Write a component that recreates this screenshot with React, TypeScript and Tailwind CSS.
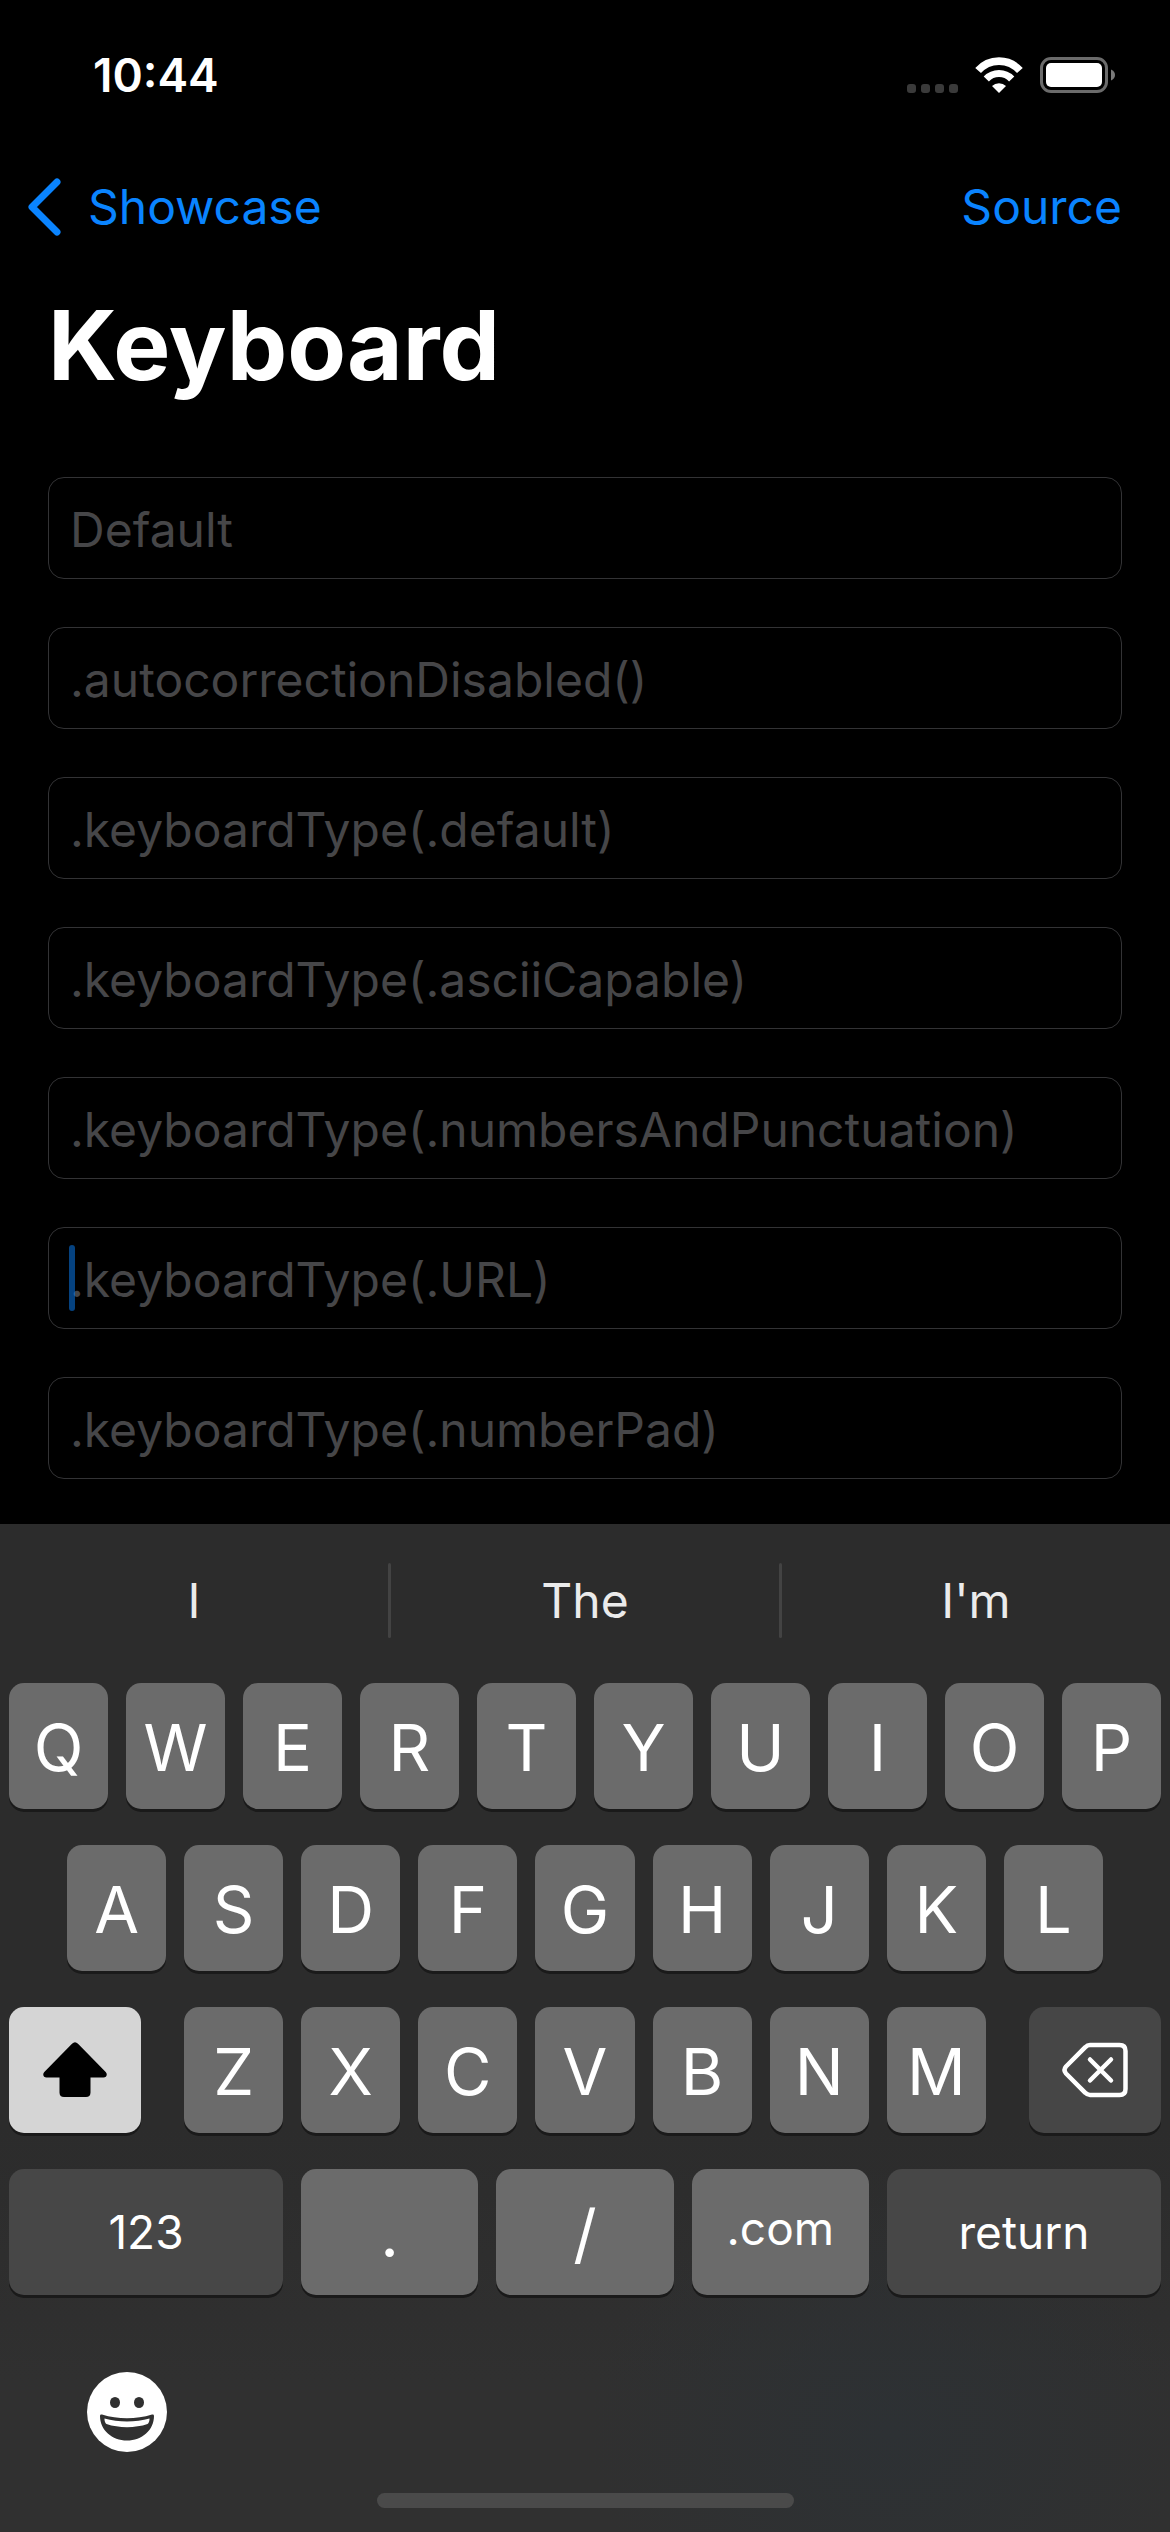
import type { ReactNode } from "react";

const fields = [
  "Default",
  ".autocorrectionDisabled()",
  ".keyboardType(.default)",
  ".keyboardType(.asciiCapable)",
  ".keyboardType(.numbersAndPunctuation)",
  ".keyboardType(.URL)",
  ".keyboardType(.numberPad)",
];

const suggestions = ["I", "The", "I'm"];

const keyBase =
  "flex h-[126px] items-center justify-center rounded-[15px] text-white shadow-[0_3px_0_#1a1a1a]";

function LetterKey({ children }: { children: ReactNode }) {
  return (
    <button type="button" className={`${keyBase} min-w-0 flex-1 bg-[#6b6b6b] pt-[2px] text-[65px] leading-none`}>
      {children}
    </button>
  );
}

function Letters({ keys }: { keys: string }) {
  return (
    <>
      {keys.split("").map((k) => (
        <LetterKey key={k}>{k}</LetterKey>
      ))}
    </>
  );
}

function StatusBar() {
  return (
    <header className="flex h-[132px] items-center justify-between pt-[18px] pr-[54px] pl-[93px]">
      <time className="text-[46px] leading-[56px] font-semibold">10:44</time>
      <div className="flex items-center">
        <svg width="52" height="36" viewBox="0 0 52 36" fill="#3a3a3a" aria-label="No signal">
          <rect x="0" y="27" width="9" height="9" rx="3" />
          <rect x="14" y="27" width="9" height="9" rx="3" />
          <rect x="28" y="27" width="9" height="9" rx="3" />
          <rect x="42" y="27" width="9" height="9" rx="3" />
        </svg>
        <svg className="ml-[16px]" width="48" height="36" viewBox="0 0 48 36" fill="none" stroke="#fff" aria-label="Wi-Fi">
          <path d="M3.1 13.6a27.7 27.7 0 0 1 41.8 0" strokeWidth="7.600" />
          <path d="M11.3 21.9a17.600 17.600 0 0 1 25.4 0" strokeWidth="7.200" />
          <path d="M24 36l-7-7a10 10 0 0 1 14 0z" fill="#fff" stroke="none" />
        </svg>
        <svg className="ml-[17px]" width="76" height="36" viewBox="0 0 76 36" aria-label="Battery full">
          <rect x="1.5" y="1.5" width="65" height="33" rx="9.5" fill="none" stroke="#6b6b6b" strokeWidth="3" />
          <rect x="6" y="6" width="56" height="24" rx="5" fill="#fff" />
          <path d="M71 12.5c2.600 1 4 3.200 4 5.500s-1.400 4.500-4 5.500z" fill="#7a7a7a" />
        </svg>
      </div>
    </header>
  );
}

export default function App() {
  return (
    <div className="flex min-h-screen flex-col bg-black font-['Inter',sans-serif] text-white">
      <StatusBar />

      <nav className="flex h-[150px] items-center justify-between pr-[48px] pl-[27px] text-[48px] leading-[60px] text-[#0a84ff]">
        <a href="#showcase" className="flex items-center gap-[27px]">
          <svg width="34" height="58" viewBox="0 0 34 58" fill="none" stroke="currentColor" strokeWidth="7" strokeLinecap="round" strokeLinejoin="round" aria-hidden="true">
            <path d="M30 4L5 29l25 25" />
          </svg>
          Showcase
        </a>
        <a href="#source">Source</a>
      </nav>

      <main className="flex flex-1 flex-col px-[48px] pb-[45px]">
        <h1 className="text-[96px] leading-[126px] font-bold">Keyboard</h1>
        <form className="mt-[69px] flex flex-col gap-[48px]">
          {fields.map((name) => (
            <div key={name} className="relative">
              <input
                type="text"
                aria-label={name}
                placeholder={name}
                className="h-[102px] w-full rounded-[16px] border border-[#333335] bg-black px-[21px] pt-[2px] text-[48px] text-white outline-none placeholder:text-[#464648]"
              />
              {name === ".keyboardType(.URL)" && (
                <span className="absolute top-[18px] left-[21px] h-[66px] w-[6px] rounded-full bg-[#0a84ff]/50" />
              )}
            </div>
          ))}
        </form>
      </main>

      <section
        aria-label="Keyboard"
        className="flex flex-col bg-[#2c2c2c] bg-[radial-gradient(ellipse_300px_260px_at_76%_90%,#2d3134,transparent),linear-gradient(to_bottom,#2c2c2c_60%,#303030_85%)]"
      >
        <div className="flex h-[159px] items-center pb-[6px]">
          {suggestions.map((s, i) => (
            <div key={s} className="contents">
              {i > 0 && <span className="h-[75px] w-[3px] rounded-full bg-[#434343]" />}
              <button type="button" className="min-w-0 flex-1 text-center text-[48px] text-[#ebebeb]">
                {s}
              </button>
            </div>
          ))}
        </div>

        <div className="flex flex-col gap-[36px] px-[9px]">
          <div className="flex gap-[18px]">
            <Letters keys="QWERTYUIOP" />
          </div>
          <div className="flex gap-[18px] px-[58px]">
            <Letters keys="ASDFGHJKL" />
          </div>
          <div className="flex gap-[43px]">
            <button type="button" aria-label="Shift" className={`${keyBase} w-[132px] bg-[#d5d5d5]`}>
              <svg width="64" height="56" viewBox="0 0 64 56" fill="#000">
                <path d="M29 1.800L1.300 30C-.9 32.400.6 35.500 3.500 35.500H16.500V50.500c0 3 1.600 4.500 4.500 4.500h22c2.900 0 4.500-1.500 4.500-4.500V35.500h13c2.900 0 4.400-3.100 2.200-5.500L35 1.800c-2-2-4-2-6 0z" />
              </svg>
            </button>
            <div className="flex min-w-0 flex-1 gap-[18px]">
              <Letters keys="ZXCVBNM" />
            </div>
            <button type="button" aria-label="Delete" className={`${keyBase} w-[132px] bg-[#464646]`}>
              <svg width="66" height="56" viewBox="0 0 66 56" fill="none" stroke="#fff" strokeWidth="4.500" strokeLinecap="round" strokeLinejoin="round">
                <path d="M28 3H57.500c4 0 6 2 6 6v38c0 4-2 6-6 6H28c-2 0-3.400-.8-4.700-2.200L4 31.500c-2-2.300-2-4.700 0-7L23.300 5.200C24.600 3.800 26 3 28 3z" />
                <path d="M28 17.500L49 38.500M49 17.500L28 38.500" />
              </svg>
            </button>
          </div>
          <div className="flex gap-[18px]">
            <button type="button" className={`${keyBase} w-[274px] bg-[#474747] text-[46px]`}>
              123
            </button>
            <LetterKey>.</LetterKey>
            <LetterKey>/</LetterKey>
            <button type="button" className={`${keyBase} min-w-0 flex-1 bg-[#6b6b6b] pb-[8px] text-[46px]`}>
              .com
            </button>
            <button type="button" className={`${keyBase} w-[274px] bg-[#474747] text-[46px]`}>
              return
            </button>
          </div>
        </div>

        <div className="flex flex-col pt-[77px] pb-[24px]">
          <button type="button" aria-label="Emoji" className="ml-[87px] w-[80px]">
            <svg width="80" height="80" viewBox="0 0 80 80" fill="none">
              <circle cx="40" cy="40" r="40" fill="#fff" />
              <ellipse cx="28" cy="30.500" rx="5" ry="5.500" fill="#303030" />
              <ellipse cx="52" cy="30.500" rx="5" ry="5.500" fill="#303030" />
              <path d="M15 42.500c16 5 34 5 50 0 1.300-.4 2 .2 2 1.500C67 58 55 68.500 40 68.500S13 58 13 44c0-1.300.7-1.900 2-1.500z" fill="#303030" />
              <path d="M17.500 46.500c14 4 31 4 45 0 .3 1.800-.8 4.800-2 5.600-12 4.200-29 4.200-41 0-1.200-.8-2.300-3.800-2-5.600z" fill="#fff" />
            </svg>
          </button>
          <div className="mx-auto mt-[41px] h-[15px] w-[417px] rounded-full bg-[#4a4a4a]" />
        </div>
      </section>
    </div>
  );
}
